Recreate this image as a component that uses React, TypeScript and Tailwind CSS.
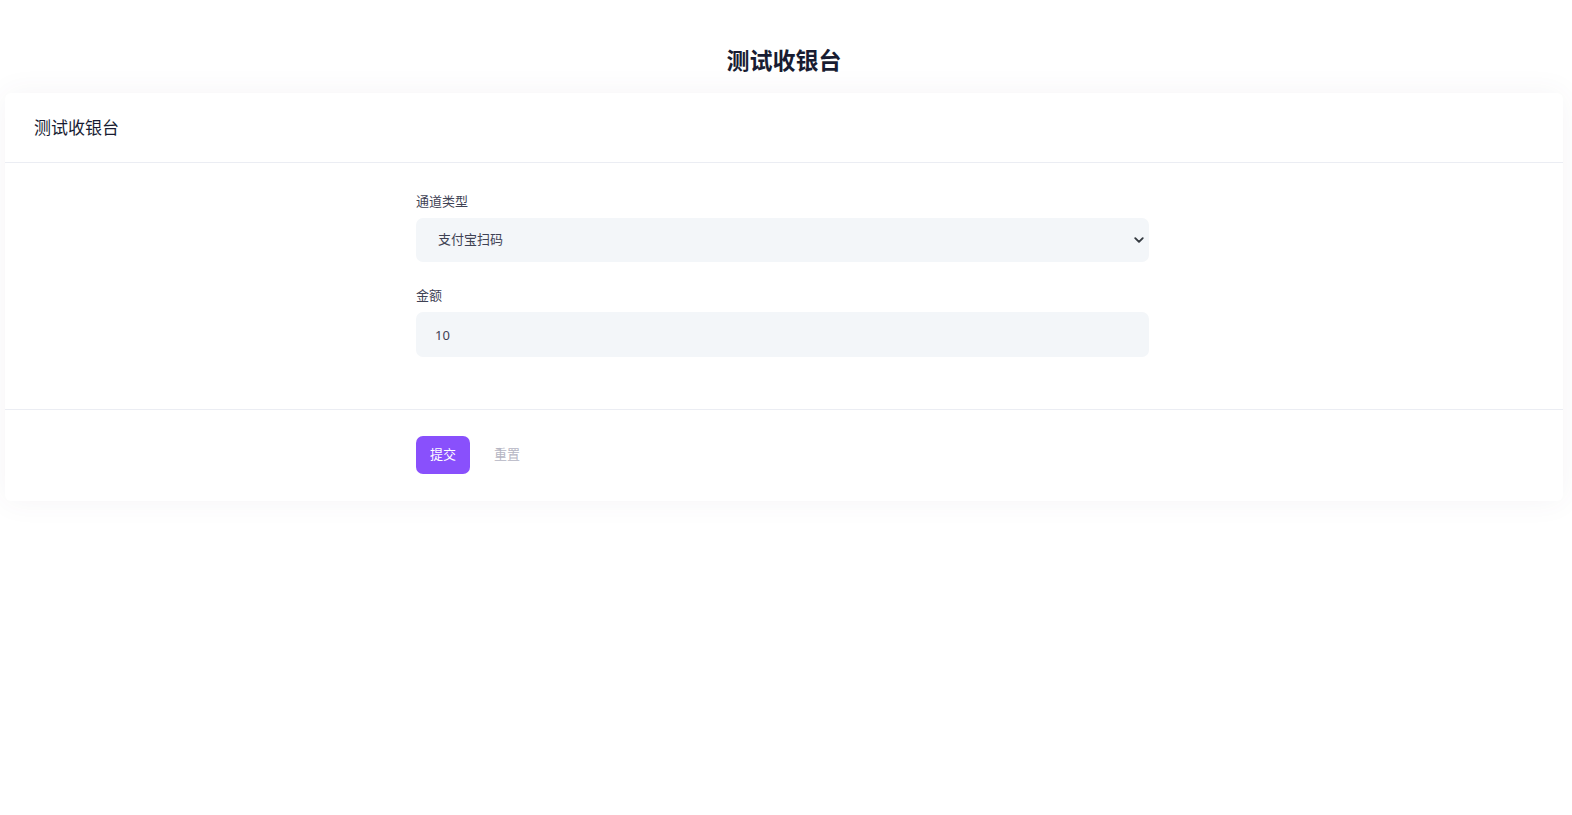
export default function App() {
  return (
    <div
      className="min-h-[815px] w-[1568px] bg-white text-[#3f4254]"
      style={{ fontFamily: '"Noto Sans", "Noto Sans CJK SC", sans-serif' }}
    >
      <h1 className="pt-[44px] pb-[17px] text-center text-[23px] font-bold leading-[32px] text-[#181c32]">
        测试收银台
      </h1>
      <div className="mx-[5px] rounded-md bg-white shadow-[0_0_30px_0_rgba(82,63,105,0.06)]">
        <div className="flex h-[70px] items-center border-b border-[#ebedf3] px-[29px]">
          <h3 className="text-[17px] font-normal text-[#181c32]">测试收银台</h3>
        </div>
        <form className="border-b border-[#ebedf3] pt-[28px] pb-[52px]">
          <div className="ml-[411px] w-[733px]">
            <label className="mb-[7px] block text-[13px] leading-[20px] text-[#3f4254]">通道类型</label>
            <div className="relative">
              <select className="h-[44px] w-full appearance-none rounded-[7px] bg-[#f3f6f9] pl-[22px] text-[13px] text-[#3f4254] outline-none">
                <option>支付宝扫码</option>
              </select>
              <svg
                className="pointer-events-none absolute right-[5px] top-1/2 -translate-y-1/2"
                width="10"
                height="10"
                viewBox="0 0 16 16"
                fill="none"
                stroke="#343a40"
                strokeWidth="3"
                strokeLinecap="round"
                strokeLinejoin="round"
              >
                <path d="M2 5l6 6 6-6" />
              </svg>
            </div>
            <label className="mt-[23px] mb-[7px] block text-[13px] leading-[20px] text-[#3f4254]">金额</label>
            <input
              defaultValue="10"
              className="h-[45px] w-full rounded-[7px] bg-[#f3f6f9] px-[19px] text-[13px] text-[#3f4254] outline-none"
            />
          </div>
        </form>
        <div className="pt-[26px] pb-[27px]">
          <div className="ml-[411px] flex w-[733px] items-center gap-[6px]">
            <button className="h-[38px] w-[54px] rounded-[7px] bg-[#8950fc] text-[13px] text-white">提交</button>
            <button className="h-[38px] px-[18px] text-[13px] text-[#b5b5c3]">重置</button>
          </div>
        </div>
      </div>
    </div>
  );
}
